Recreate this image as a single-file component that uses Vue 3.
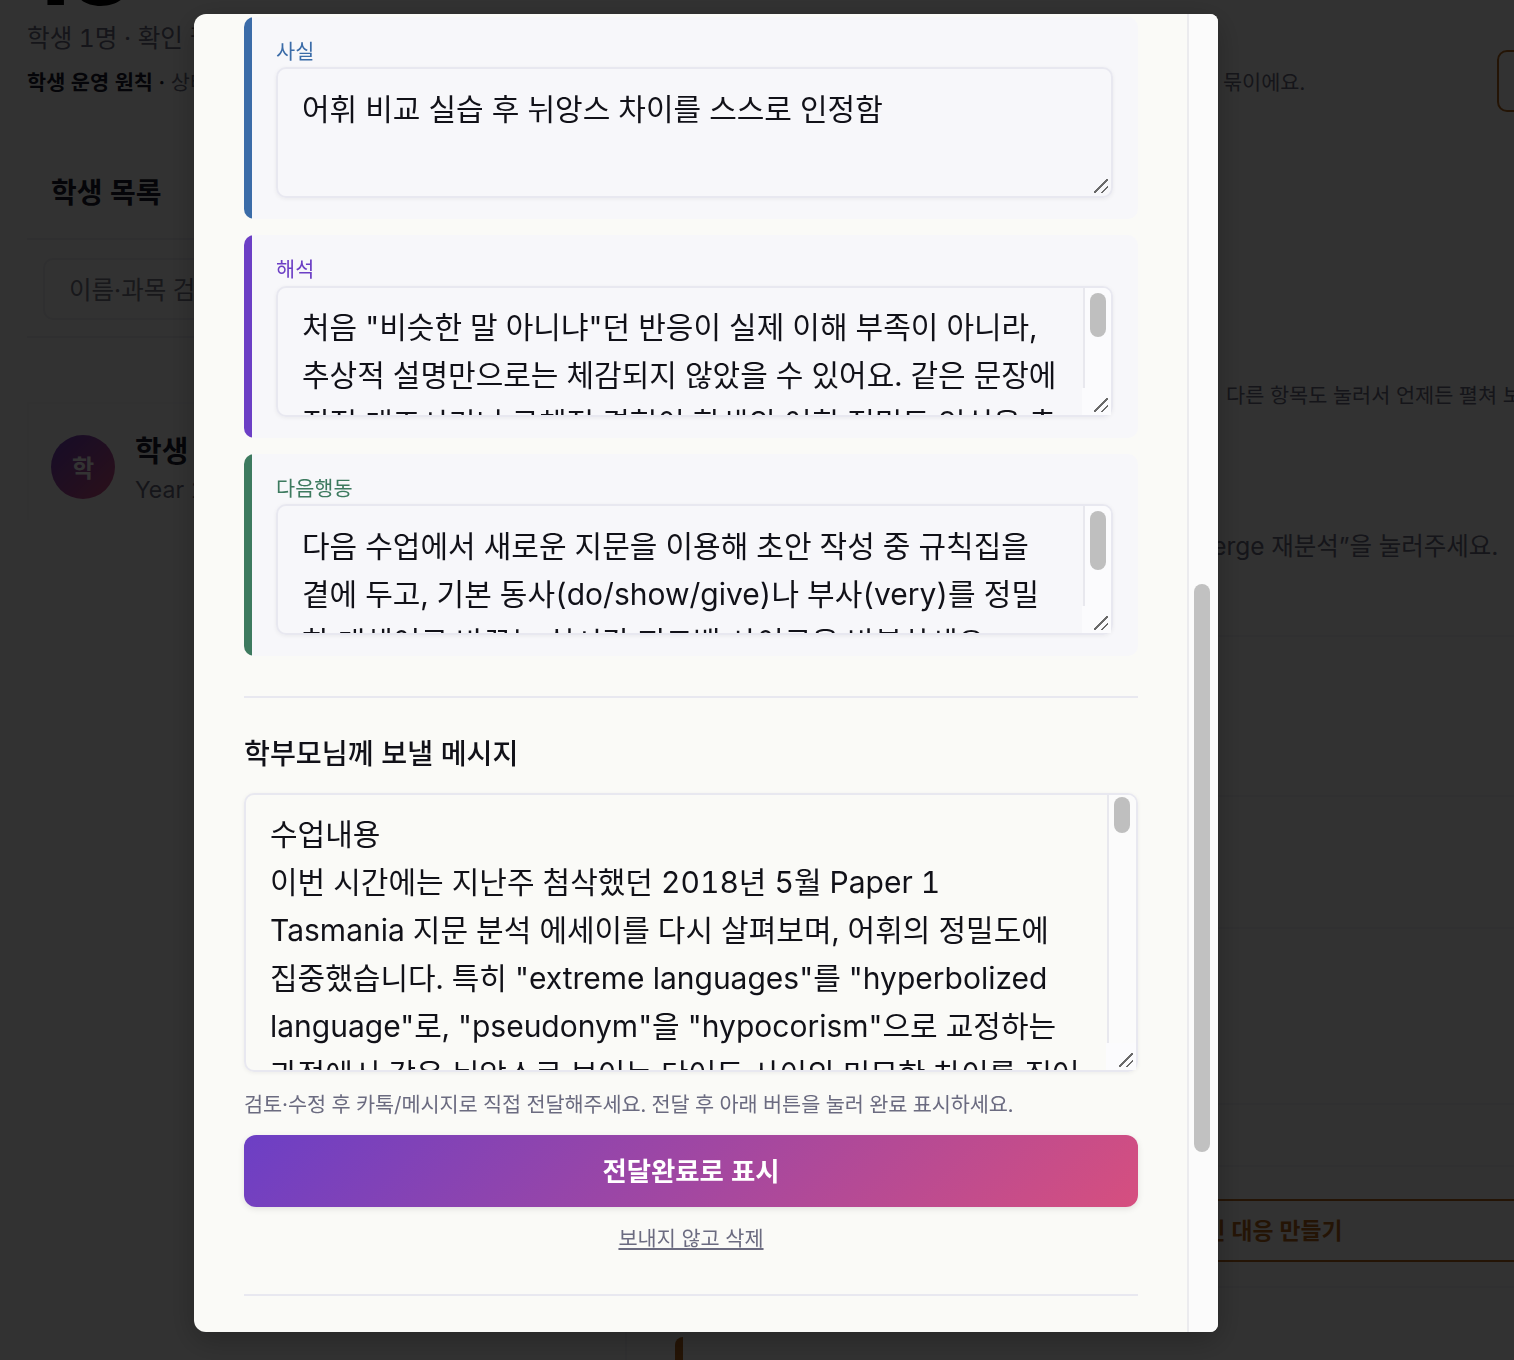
<script setup>
const cards = [
  { key: 'fact', label: '사실', text: '어휘 비교 실습 후 뉘앙스 차이를 스스로 인정함', thumb: 0 },
  { key: 'read', label: '해석', text: '처음 "비슷한 말 아니냐"던 반응이 실제 이해 부족이 아니라, 추상적 설명만으로는 체감되지 않았을 수 있어요. 같은 문장에 직접 대조시키니 구체적 경험이 학생의 어휘 정밀도 인식을 촉진하는 데 도움이 될 수 있어요.', thumb: 44 },
  { key: 'next', label: '다음행동', text: '다음 수업에서 새로운 지문을 이용해 초안 작성 중 규칙집을 곁에 두고, 기본 동사(do/show/give)나 부사(very)를 정밀한 대체어로 바꾸는 실시간 피드백 사이클을 반복하세요.', thumb: 59 }
]
const message = `수업내용
이번 시간에는 지난주 첨삭했던 2018년 5월 Paper 1 Tasmania 지문 분석 에세이를 다시 살펴보며, 어휘의 정밀도에 집중했습니다. 특히 "extreme languages"를 "hyperbolized language"로, "pseudonym"을 "hypocorism"으로 교정하는 과정에서 같은 뉘앙스로 보이는 단어도 사이의 미묘한 차이를 짚어 보았습니다.`
</script>

<template>
  <div class="page">
    <header class="head">
      <div class="big">13</div>
      <p class="sub">학생 1명 · 확인 필요 1건</p>
      <div class="principle">
        <p class="principle-left"><b>학생 운영 원칙 ·</b> 상태별 우선순위</p>
        <p class="principle-right">묶이에요.</p>
        <span class="head-btn"></span>
      </div>
    </header>
    <div class="columns">
      <aside class="side">
        <h2 class="side-title">학생 목록</h2>
        <div class="search-row"><div class="search">이름·과목 검색</div></div>
        <div class="student">
          <div class="avatar">학</div>
          <div>
            <div class="student-name">학생</div>
            <div class="student-year">Year 1</div>
          </div>
        </div>
      </aside>
      <main class="detail">
        <p class="note">- 다른 항목도 눌러서 언제든 펼쳐 보세요</p>
        <p class="merge">“Merge 재분석”을 눌러주세요.</p>
        <div class="rule r1"></div>
        <div class="rule r2"></div>
        <div class="rule r3"></div>
        <div class="rule r4"></div>
        <div class="rule r5"></div>
        <div class="cta">확인 대응 만들기</div>
        <div class="rule r6"></div>
        <div class="accent"></div>
      </main>
    </div>
  </div>

  <div class="overlay">
    <section class="modal">
      <div class="modal-body">
        <div v-for="c in cards" :key="c.key" class="card" :class="c.key">
          <div class="card-label">{{ c.label }}</div>
          <div class="field-wrap">
            <textarea class="field">{{ c.text }}</textarea>
            <div v-if="c.thumb" class="bar">
              <div class="track"><div class="thumb" :style="{ height: c.thumb + 'px' }"></div></div>
              <div class="corner"></div>
            </div>
            <span class="grip"></span>
          </div>
        </div>
        <hr class="sep first" />
        <h3 class="msg-title">학부모님께 보낼 메시지</h3>
        <div class="field-wrap msg-wrap">
          <textarea class="field msg">{{ message }}</textarea>
          <div class="bar">
            <div class="track"><div class="thumb msg-thumb"></div></div>
            <div class="corner"></div>
          </div>
          <span class="grip"></span>
        </div>
        <p class="msg-hint">검토·수정 후 카톡/메시지로 직접 전달해주세요. 전달 후 아래 버튼을 눌러 완료 표시하세요.</p>
        <button class="send">전달완료로 표시</button>
        <div class="del-row"><a class="del">보내지 않고 삭제</a></div>
        <hr class="sep last" />
      </div>
      <div class="gutter"><div class="gutter-thumb"></div></div>
    </section>
  </div>
</template>

<style>
html, body { margin: 0; background: #fafaf7; }
</style>

<style scoped>
* { box-sizing: border-box; }
.page, .overlay, textarea, button {
  font-family: Inter, "Noto Sans CJK KR", "Noto Sans", sans-serif;
  font-variant-numeric: tabular-nums;
}
.page {
  height: 1360px;
  width: 1514px;
  overflow: hidden;
  background: #fafaf7;
  color: #1a1a2e;
}
.head { display: flow-root; padding-left: 27px; height: 130px; }
.big {
  font-size: 96px;
  line-height: 96px;
  font-weight: 800;
  font-variant-numeric: normal;
  color: #000;
  margin-top: -78px;
  height: 96px;
}
.sub { margin: -3px 0 0; height: 46px; font-size: 24.6px; line-height: 46px; color: #6b6b80; }
.principle { display: flex; align-items: center; height: 62px; margin-top: -11px; width: 1590px; }
.principle-left { margin: 0; font-size: 20.8px; color: #6b6b80; }
.principle-left b { color: #1a1a2e; font-weight: 600; }
.principle-right { margin: 0 0 0 auto; font-size: 20.8px; color: #6b6b80; }
.head-btn {
  width: 120px;
  height: 62px;
  margin-left: 192px;
  border: 2px solid #b5651d;
  border-radius: 10px;
  flex: none;
}
.columns { display: flex; height: 1230px; }
.side { width: 600px; border-right: 2px solid #ececf2; margin-left: 27px; flex: none; }
.side-title { margin: 0; padding: 42px 0 0 24px; height: 110px; font-size: 28px; line-height: 42px; font-weight: 700; border-bottom: 2px solid #e8e8f0; }
.search-row { padding: 18px 16px; height: 98px; border-bottom: 2px solid #e8e8f0; }
.search { height: 62px; border: 2px solid #e8e8f0; border-radius: 10px; padding-left: 24px; line-height: 60px; font-size: 24.5px; color: #777788; }
.student { display: flex; gap: 20px; height: 118px; margin-top: 64px; padding: 31px 22px 0; border: 2px solid #f3f3f6; border-bottom: 0; }
.avatar {
  width: 64px; height: 64px; border-radius: 50%;
  background: linear-gradient(135deg, #6c3fc5, #d64f7f);
  color: #fff; font-weight: 700; font-size: 24px;
  display: flex; align-items: center; justify-content: center;
  padding-bottom: 2px;
}
.student-name { font-size: 29px; font-weight: 700; line-height: 34px; }
.student-year { font-size: 23px; color: #6b6b80; line-height: 34px; margin-top: 4px; }
.detail { flex: 1; min-width: 0; }
.note { margin: 0; padding: 252px 0 0 580px; height: 279px; font-size: 20.8px; line-height: 28px; white-space: nowrap; color: #6b6b80; }
.merge { margin: 0; padding: 120px 16px 0 0; font-size: 24.5px; line-height: 34px; text-align: right; color: #6b6b80; }
.rule { border-bottom: 2px solid #eeeef2; }
.r1 { height: 74px; }
.r2 { height: 160px; }
.r3 { height: 132px; }
.r4 { height: 176px; }
.r5 { height: 62px; }
.r6 { height: 26px; }
.cta {
  margin-top: 32px;
  height: 63px;
  line-height: 59px;
  border: solid #b5651d;
  border-width: 2px 0;
  color: #b5651d;
  font-size: 22.8px;
  font-weight: 700;
  text-align: right;
  padding-right: 171.5px;
}
.accent { width: 8px; height: 60px; margin: 49px 0 0 48px; background: #b5651d; border-radius: 8px 0 0 0; }

.overlay {
  position: fixed;
  inset: 0;
  background: rgba(0, 0, 0, 0.8);
}
.modal {
  display: flex;
  width: 1024px;
  height: 1318px;
  margin: 14px 0 0 194px;
  background: #fafaf7;
  border-radius: 12px 8px 8px 12px;
  overflow: hidden;
  box-shadow: 0 8px 30px rgba(0,0,0,.25);
}
.modal-body { flex: 1; min-width: 0; padding: 2.5px 49px 0 50px; }
.gutter {
  width: 31px;
  flex: none;
  background: #fbfbfb;
  border-left: 2px solid #ebebee;
  padding: 570px 8px 0 5px;
}
.gutter-thumb { width: 16px; height: 568px; background: #c1c1c1; border-radius: 8px; }

.card {
  height: 202.5px;
  padding: 20px 25px 0 32px;
  margin-bottom: 16px;
  border-radius: 10px;
}
.card.fact { background: linear-gradient(to right, #3b6ca8 8px, #f7f7fa 8px); }
.card.read { background: linear-gradient(to right, #6c3fc5 8px, #f7f7fa 8px); }
.card.next { background: linear-gradient(to right, #3d7a5f 8px, #f7f7fa 8px); margin-bottom: 0; }
.card-label { font-size: 20.8px; line-height: 26px; margin-bottom: 2.5px; padding-top: 2px; height: 28px; }
.fact .card-label { color: #3b6ca8; }
.read .card-label { color: #6c3fc5; }
.next .card-label { color: #3d7a5f; }
.field-wrap { position: relative; background: #f7f7fa; border-radius: 10px; }
.field {
  display: block;
  width: 100%;
  height: 131px;
  padding: 15.5px 52px 0 24px;
  margin: 0;
  border: 2px solid #e8e8f0;
  border-radius: 10px;
  background: transparent;
  font-size: 30px;
  line-height: 48px;
  color: #111118;
  outline: none;
  resize: none;
  overflow: hidden;
  box-shadow: 0 1px 4px rgba(0, 0, 0, 0.06);
}
.bar {
  position: absolute;
  top: 2px;
  right: 2px;
  bottom: 2px;
  width: 28px;
  display: flex;
  flex-direction: column;
  background: #fbfbfd;
  border-radius: 0 8px 8px 0;
  pointer-events: none;
}
.track { flex: 1; border-left: 2px solid #e8e8ee; padding: 5px 0 0 5px; }
.thumb { width: 16px; background: #bfbfbf; border-radius: 8px; }
.msg-thumb { height: 36px; }
.corner { height: 27px; margin-left: -1px; background: #fbfbfd; }
.grip {
  position: absolute;
  right: 5px;
  bottom: 5px;
  width: 14px;
  height: 14px;
  pointer-events: none;
  background: linear-gradient(135deg, transparent 46%, #6a6a6a 46% 54%, transparent 54% 73%, #6a6a6a 73% 81%, transparent 81%);
}
.sep { margin: 0; border: 0; height: 2px; background: #e8e8f0; }
.sep.first { margin-top: 40px; }
.msg-title {
  margin: 0;
  padding-top: 36px;
  height: 95px;
  font-size: 28.2px;
  line-height: 40px;
  font-weight: 500;
  color: #111118;
}
.msg-wrap { background: #fafaf7; }
.msg { height: 279px; padding: 15px 56px 0 24px; }
.msg-wrap .bar { width: 29px; background: #fbfbfb; }
.msg-wrap .track { padding: 2px 0 0 5px; }
.msg-hint { margin: 19px 0 0; height: 27px; font-size: 20.8px; letter-spacing: -0.11px; line-height: 27px; color: #6b6b80; white-space: nowrap; }
.send {
  display: block;
  width: 100%;
  height: 72px;
  margin-top: 17px;
  padding: 0 0 3px;
  border: 0;
  border-radius: 12px;
  background: linear-gradient(135deg, #6c3fc5, #d64f7f);
  color: #fff;
  font-size: 26.4px;
  font-weight: 700;
  box-shadow: 0 2px 6px rgba(0,0,0,.1);
}
.del-row { text-align: center; margin-top: 17px; height: 30px; line-height: 30px; }
.del { font-size: 20.8px; color: #6b6b80; text-decoration: underline; }
.sep.last { margin-top: 40px; }
</style>
